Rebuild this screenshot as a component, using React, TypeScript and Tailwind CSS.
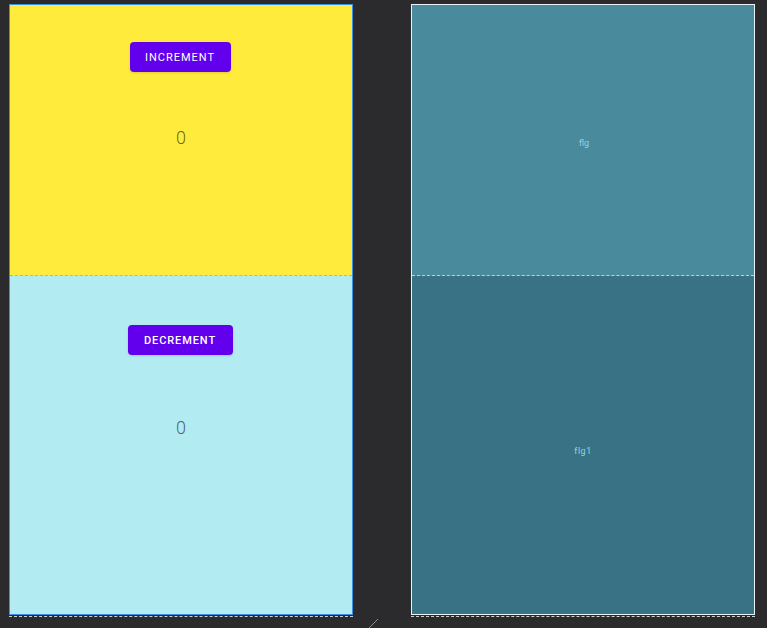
import React from "react";

export default function App() {
  return (
    <div
      className="w-[767px] h-[628px] bg-[#2b2b2d] relative overflow-hidden"
      style={{ fontFamily: "Roboto, 'Noto Sans', sans-serif" }}
    >
      <div className="flex pt-[4px] pl-[9px] gap-[58px]">
        {/* Design view */}
        <div className="flex flex-col">
          <div className="w-[344px] h-[611px] border border-[#3d8fe0] flex flex-col">
            <div className="h-[271px] bg-[#ffeb3b] border-b border-dashed border-[#c9bd4a] flex flex-col items-center">
              <button className="mt-[37px] -ml-[2px] w-[101px] h-[30px] pt-[3px] bg-[#6200ee] rounded-[4px] text-white text-[11px] font-normal tracking-[1px] shadow-sm">
                INCREMENT
              </button>
              <div className="mt-[55px] text-[18px] leading-[22px] font-light text-black/60">0</div>
            </div>
            <div className="flex-1 bg-[#b2ebf2] flex flex-col items-center">
              <button className="mt-[49px] -ml-[2px] w-[105px] h-[30px] pt-[3px] bg-[#6200ee] rounded-[4px] text-white text-[11px] font-medium tracking-[0.9px] shadow-sm">
                DECREMENT
              </button>
              <div className="mt-[62px] text-[18px] leading-[22px] font-light text-black/60">0</div>
            </div>
          </div>
          <div className="mt-[1px] w-[344px] border-t border-dashed border-[#cfcfcf]" />
        </div>

        {/* Blueprint view */}
        <div className="flex flex-col">
          <div className="w-[344px] h-[611px] border border-[#e8f4f7] flex flex-col">
            <div className="h-[271px] bg-[#4a8a9d] border-b border-dashed border-[#9fdcec] flex items-center justify-center">
              <span className="text-[9px] text-[#93d2e2] mt-[8px] ml-[2px]">flg</span>
            </div>
            <div className="flex-1 bg-[#387284] flex items-center justify-center">
              <span className="text-[9px] text-[#93d2e2] mt-[13px] tracking-[0.5px]">flg1</span>
            </div>
          </div>
          <div className="mt-[1px] w-[344px] border-t border-dashed border-[#cfcfcf]" />
        </div>
      </div>

      {/* resize handle */}
      <svg className="absolute left-[366px] top-[618px]" width="14" height="12" viewBox="0 0 14 12">
        <line x1="2" y1="11" x2="12" y2="1" stroke="#8a8a8a" strokeWidth="1" />
      </svg>
    </div>
  );
}
